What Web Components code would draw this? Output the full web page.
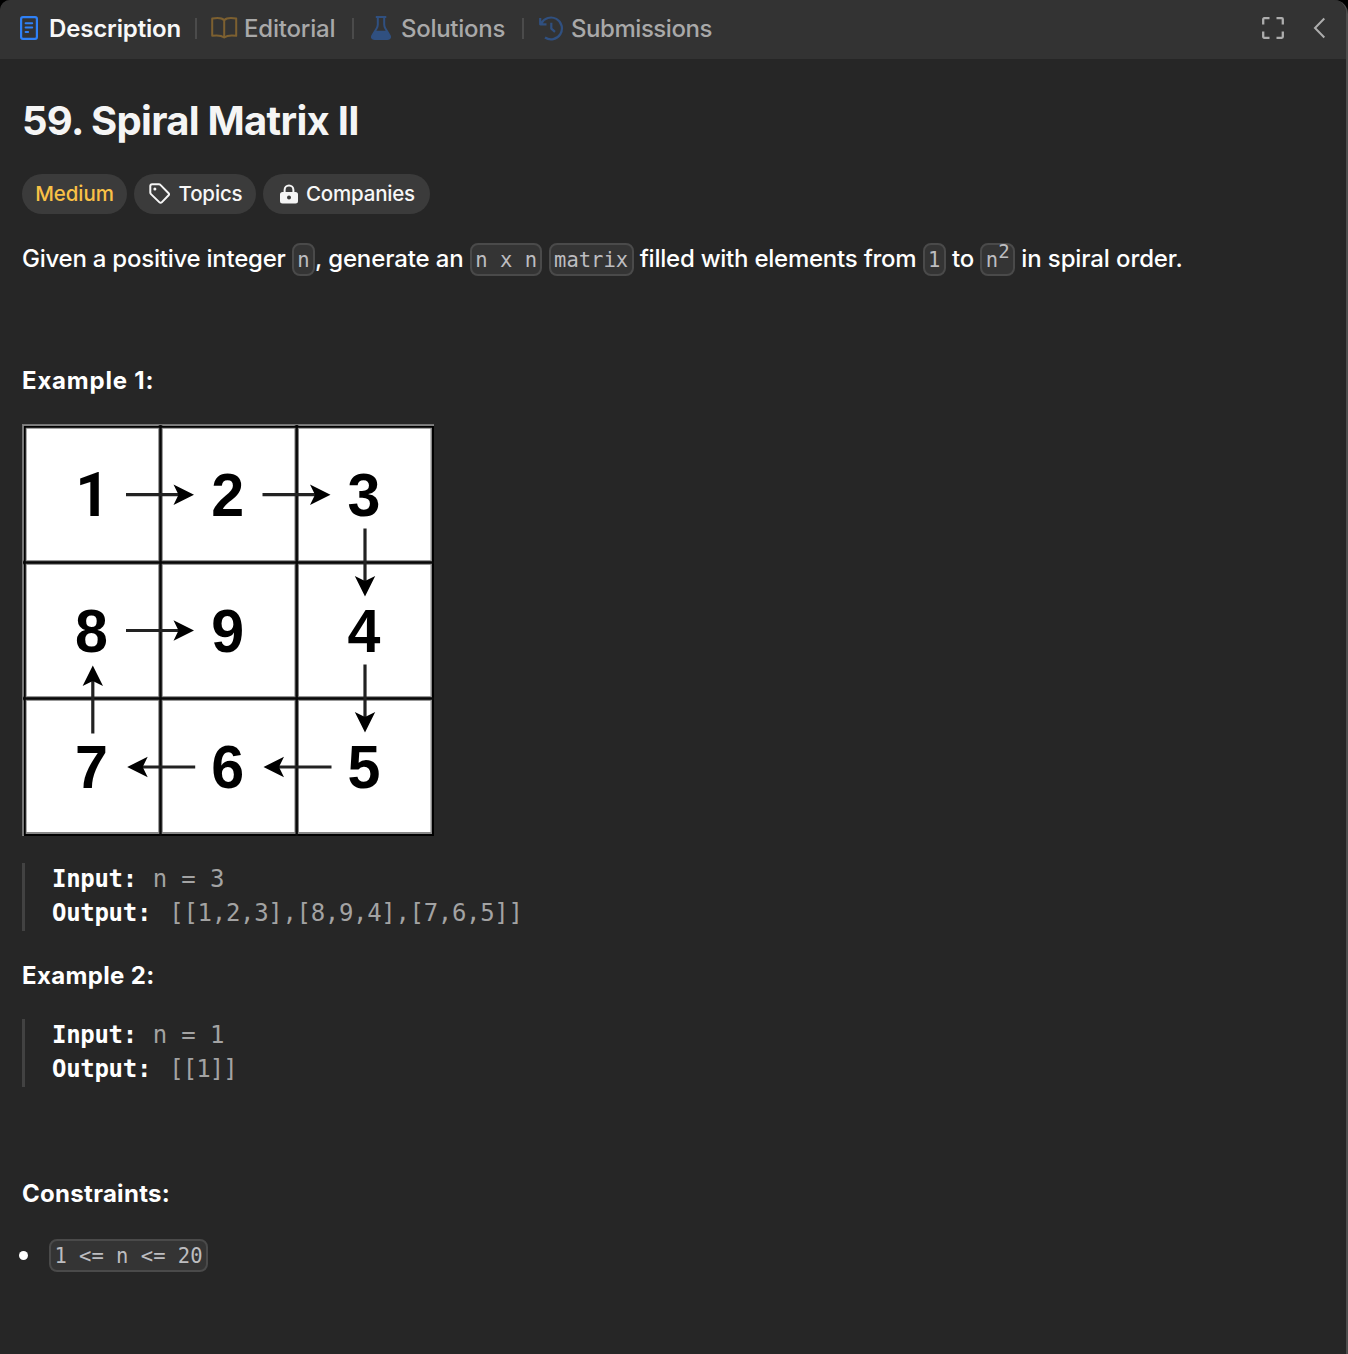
<!DOCTYPE html>
<html lang="en">
<head>
<meta charset="utf-8">
<title>59. Spiral Matrix II</title>
<style>
html,body{margin:0;height:100%;background:#000;overflow:hidden}
body{font-family:Inter,"Liberation Sans",sans-serif;color:#fff}
</style>
</head>
<body>
<problem-panel></problem-panel>
<script>
function define(name, html) {
  const template = document.createElement('template');
  template.innerHTML = html;
  customElements.define(name, class extends HTMLElement {
    constructor() {
      super();
      this.attachShadow({ mode: 'open' }).appendChild(template.content.cloneNode(true));
    }
  });
}

const ICONS = {
  doc: [20, 24, '<rect x="1.1" y="1.1" width="15.800" height="21.800" rx="1.800" fill="none" stroke="#2f81f7" stroke-width="2.2"/><path d="M5.600 7.200h6.600M5.600 11.600h6.600M5.600 16h2.500" fill="none" stroke="#2f81f7" stroke-width="2" stroke-linecap="round"/>'],
  book: [27, 22, '<path d="M13.2 3.2C11 1 6 .7 1.2 1.6v17.2c4.600-.6 9.200-.5 12 1.700 2.800-2.200 7.400-2.300 12-1.700V1.600C20.400.7 15.400 1 13.200 3.200zM13.200 3.200v17" fill="none" stroke="#7d6030" stroke-width="2" stroke-linejoin="round"/>'],
  flask: [21, 24, '<path d="M4.800 1h10.500M6.800 1v7.500c0 1.500-.4 2.600-1.200 3.900L1.400 19.500c-1.100 2 .1 3.500 2 3.500h13.200c1.900 0 3.100-1.500 2-3.500l-4.200-7.100c-.8-1.300-1.200-2.400-1.200-3.900V1" fill="none" stroke="#305080" stroke-width="2" stroke-linejoin="round"/><path d="M4.200 14.800h11.600l3.200 5.700-1 2.500H2.200l-1-2.500z" fill="#305080"/>'],
  history: [25, 25, '<path d="M2.300 7.500A10.900 10.900 0 1 1 6 21.500M1.200 2v6.300h6.300M12.300 6.800v5.800l3.700 3.300" fill="none" stroke="#305080" stroke-width="2.200" stroke-linejoin="round"/>'],
  expand: [22, 22, '<path d="M1.200 7.500V2.200a1 1 0 0 1 1-1h5.300M14.500 1.200h5.300a1 1 0 0 1 1 1v5.300M20.800 14.500v5.300a1 1 0 0 1-1 1h-5.300M7.500 20.800H2.200a1 1 0 0 1-1-1v-5.300" fill="none" stroke="#adadad" stroke-width="2.300"/>'],
  chevron: [13, 22, '<path d="M11.300 1.500 2 11l9.300 9.500" fill="none" stroke="#adadad" stroke-width="2"/>'],
  tag: [22, 22, '<path d="M1.300 3.100c0-1.100.8-1.900 1.900-1.900h6.600c.6 0 1.200.2 1.600.7l8.200 8.400c.6.600.6 1.400 0 2l-6.900 7.100c-.6.600-1.600.6-2.200 0L2 11.100c-.5-.5-.7-1-.7-1.600z" fill="none" stroke="#f5f5f5" stroke-width="2" stroke-linejoin="round"/><circle cx="5.900" cy="5.900" r="1.500" fill="#f5f5f5"/>'],
  lock: [18, 20, '<path d="M4.600 9V5.900a4.400 4.400 0 0 1 8.800 0V9" fill="none" stroke="#f5f5f5" stroke-width="2"/><path fill-rule="evenodd" d="M2.500 8h13Q18 8 18 10.500v6.500q0 2.500-2.500 2.500h-13Q0 19.500 0 17V10.500q0-2.500 2.500-2.500zM9 11.500a2 2 0 1 0 0 4 2 2 0 0 0 0-4z" fill="#f5f5f5"/>']
};
customElements.define('ui-icon', class extends HTMLElement {
  constructor() {
    super();
    this.attachShadow({ mode: 'open' });
  }
  connectedCallback() {
    const [w, h, body] = ICONS[this.getAttribute('name')];
    this.shadowRoot.innerHTML = `<style>:host{display:block;flex:none}svg{display:block}</style><svg width="${w}" height="${h}" viewBox="0 0 ${w} ${h}">${body}</svg>`;
  }
});

define('panel-tab', `<style>
:host{display:flex;align-items:center;height:57px;font-size:24px;color:#a9a9a9;white-space:nowrap}
:host([active]){color:#f8f8f8}
::slotted(ui-icon){margin-bottom:1px}
</style><slot name="icon"></slot><slot></slot>`);

define('tab-bar', `<style>
:host{display:flex;align-items:flex-start;height:59px;box-sizing:border-box;background:#333;padding-left:20px}
i{width:2px;height:21px;background:#4b4b4b;margin-top:18px;flex:none}
.d{width:175px}.e{width:141px;margin-left:14px}.s{width:151px;margin-left:17px}.h{margin-left:15px}
.d ui-icon{margin-right:9px}.e ui-icon{margin-right:6px}.s ui-icon{margin-right:9px}.h ui-icon{margin-right:7px}
.actions{display:flex;gap:28px;margin-left:auto;height:56px;align-items:center;padding-right:20px}
.actions ui-icon:first-child{margin-right:1px}
.e,.s,.h{font-weight:500}
.d{letter-spacing:-.15px;font-weight:600}.e{letter-spacing:-.2px}.s{letter-spacing:-.28px}.h{letter-spacing:-.45px}
</style>
<panel-tab active class="d"><ui-icon slot="icon" name="doc"></ui-icon>Description</panel-tab><i></i>
<panel-tab class="e"><ui-icon slot="icon" name="book"></ui-icon>Editorial</panel-tab><i></i>
<panel-tab class="s"><ui-icon slot="icon" name="flask"></ui-icon>Solutions</panel-tab><i></i>
<panel-tab class="h"><ui-icon slot="icon" name="history"></ui-icon>Submissions</panel-tab>
<div class="actions"><ui-icon name="expand"></ui-icon><ui-icon name="chevron"></ui-icon></div>`);

define('tag-pill', `<style>
:host{display:flex;align-items:center;justify-content:center;gap:8px;height:40px;border-radius:20px;background:#3b3b3b;font-size:20.500px;font-weight:500;color:#f7f7f7;white-space:nowrap}
</style><slot></slot>`);

define('code-chip', `<style>
:host{display:inline-block;box-sizing:border-box;height:33px;line-height:31px;border:2px solid #4a4a4a;border-radius:8px;background:#343434;padding:0 3.400px;font-family:"DejaVu Sans Mono",monospace;font-size:20.500px;font-weight:400;letter-spacing:0;color:#bdbdc0;white-space:pre;vertical-align:middle}
::slotted(sup){font-size:19px;line-height:0;vertical-align:9px}
</style><slot></slot>`);

define('example-block', `<style>
:host{display:block;box-sizing:border-box;height:68px;border-left:3px solid #424242;padding-left:27px;font:24px/34px "DejaVu Sans Mono",monospace;letter-spacing:-.15px;color:#a3a3a3;white-space:pre}
div{margin-top:-1px}
::slotted(b){color:#fff;letter-spacing:-.3px;margin-right:1.500px}
::slotted(span){letter-spacing:-.32px;margin-left:2.500px}
::slotted(span.short){letter-spacing:-1px}
</style><div><slot></slot></div>`);

customElements.define('spiral-matrix', class extends HTMLElement {
  constructor() {
    super();
    const rows = [[1, 2, 3], [8, 9, 4], [7, 6, 5]];
    let g = '';
    rows.forEach((row, r) => row.forEach((n, c) => {
      const one = n === 1;
      g += `<text${one ? ' class="one"' : ''} transform="translate(${69.5 + c * 136.2 + (one ? 1 : 0)} ${91.5 + r * 136}) scale(.97 1)">${n}</text>`;
    }));
    const arrow = (x, y, a) => `<g transform="translate(${x} ${y}) rotate(${a})"><path d="M0 0H54" stroke="#222" stroke-width="3.200"/><path d="M68 0 47.500-10.200 52.500 0 47.500 10.200z"/></g>`;
    g += arrow(104, 70.7, 0) + arrow(240.5, 70.7, 0) + arrow(104, 206.5, 0)
      + arrow(343, 104.500, 90) + arrow(343, 240.500, 90)
      + arrow(309.500, 343, 180) + arrow(173.200, 343, 180) + arrow(70.800, 309.500, -90);
    this.attachShadow({ mode: 'open' }).innerHTML = `<style>:host{display:block;width:412px;height:412px}svg{display:block}text{font:bold 61px "Liberation Sans",sans-serif;text-anchor:middle}.one{font:bold 62px Roboto,sans-serif}</style>
    <svg width="412" height="412" viewBox="0 0 412 412"><rect width="412" height="412" fill="#fff"/>
    <g fill="none"><path d="M.75 0V412M0 .75H412" stroke="#777" stroke-width="1.500"/>
    <path d="M138.500 0V412M274.700 0V412M0 138.500H412M0 274.500H412" stroke="#777" stroke-width="4.400"/>
    <path d="M3.200 3.200H410V409.500H3.200z" stroke="#888" stroke-width="3"/>
    <path d="M2.700 2.700H411V411H2.700z" stroke="#000" stroke-width="2"/>
    <path d="M138.500 1V412M274.700 1V412M1 138.500H412M1 274.500H412" stroke="#080808" stroke-width="2.400"/></g>${g}</svg>`;
  }
});

define('problem-content', `<style>
:host{display:flex;flex-direction:column;padding:0 22px;font-size:24px;line-height:34px}
h1{margin:37px 0 0;font-size:40px;line-height:50px;font-weight:700;letter-spacing:-.720px;color:#f5f5f5;white-space:nowrap}
.tags{display:flex;gap:7px;margin-top:28px}
.m{width:105px;color:#f9c146;letter-spacing:-.1px}.t{width:122px;letter-spacing:-.15px}.c{width:167px;letter-spacing:-.2px}
.t ui-icon{margin-left:1px}.c ui-icon{margin-left:2px}
p{margin:28px 0 0;height:34px;white-space:nowrap}
.intro{letter-spacing:-.12px;font-weight:500}
.intro span{letter-spacing:-.24px}
.intro code-chip{margin-top:-2px}
h2{font-size:24px;line-height:34px;font-weight:700;margin:0;letter-spacing:.35px}
.ex1{margin-top:88px;letter-spacing:.8px}
spiral-matrix{margin-top:26px}
.b1{margin-top:27px}.ex2{margin-top:28px}.b2{margin-top:26px}
.con{margin-top:90px;letter-spacing:.3px}
ul{list-style:none;margin:28px 0 0;padding:0;display:flex;align-items:center;gap:21px;margin-left:-3px}
li{display:contents}
.dot{width:9px;height:9px;border-radius:50%;background:#fff;margin-bottom:1px}
</style>
<h1>59. Spiral Matrix II</h1>
<div class="tags"><tag-pill class="m">Medium</tag-pill><tag-pill class="t"><ui-icon name="tag"></ui-icon>Topics</tag-pill><tag-pill class="c"><ui-icon name="lock"></ui-icon>Companies</tag-pill></div>
<p class="intro"><span>Given a positive integer </span><code-chip>n</code-chip>, generate an <code-chip>n x n</code-chip> <code-chip>matrix</code-chip><span> filled with elements from </span><code-chip>1</code-chip> to <code-chip>n<sup>2</sup></code-chip> in spiral order.</p>
<h2 class="ex1">Example 1:</h2>
<spiral-matrix></spiral-matrix>
<example-block class="b1"><b>Input:</b> n = 3
<b>Output:</b> <span>[[1,2,3],[8,9,4],[7,6,5]]</span></example-block>
<h2 class="ex2">Example 2:</h2>
<example-block class="b2"><b>Input:</b> n = 1
<b>Output:</b> <span class="short">[[1]]</span></example-block>
<h2 class="con">Constraints:</h2>
<ul><li><span class="dot"></span><code-chip>1 &lt;= n &lt;= 20</code-chip></li></ul>`);

define('problem-panel', `<style>
:host{display:block;box-sizing:border-box;height:1354px;background:#262626;border-right:2px solid #4d4d4d;border-radius:10px 14px 0 0;overflow:hidden}
</style><tab-bar></tab-bar><problem-content></problem-content>`);
</script>
</body>
</html>
